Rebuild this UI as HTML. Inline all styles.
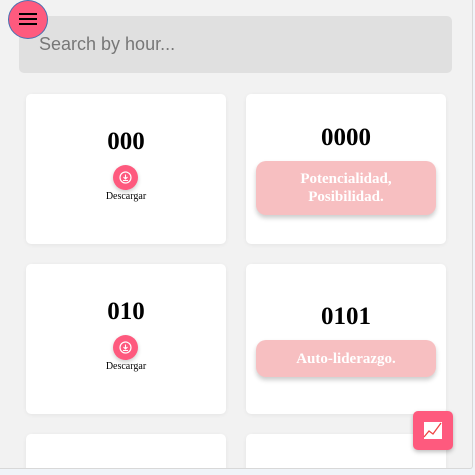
<!DOCTYPE html>
<html><head><style>
html,body{margin:0;width:475px;height:475px;overflow:hidden}
body{background:#f0f4f8;font-family:"Liberation Serif",serif;position:relative}
.main{position:absolute;left:0;top:0;width:472px;height:468px;background:#f2f2f2;border-right:1px solid #d8d8d8;border-bottom:1px solid #d8d8d8;border-bottom-right-radius:3px;overflow:hidden}
.search{position:absolute;left:19px;top:16px;width:433px;height:57px;background:#e0e0e0;border-radius:5px;font-family:"Liberation Sans",sans-serif;font-size:18px;color:#777;line-height:57px;padding-left:20px;box-sizing:border-box}
.menu{position:absolute;left:8px;top:0;width:40px;height:39px;border-radius:50%;background:#fe5a7e;border:1px solid #4a6fb0;box-sizing:border-box}
.menu i{position:absolute;left:10px;width:18px;height:2px;background:#000}
.card{position:absolute;width:200px;height:150px;background:#fff;border-radius:5px;box-shadow:0 1px 4px rgba(0,0,0,.06);text-align:center}
.t{font-weight:bold;font-size:25px;position:absolute;left:0;right:0}
.dl{position:absolute;left:87px;width:25px;height:25px;border-radius:50%;background:#fe5a7e;box-shadow:0 2px 4px rgba(0,0,0,.2)}
.lbl{position:absolute;left:0;right:0;font-size:10px}
.btn{position:absolute;left:10px;width:180px;background:#f7bfc1;border-radius:10px;color:#fff;font-weight:bold;font-size:15px;box-shadow:0 3px 5px rgba(0,0,0,.2);display:flex;align-items:center;justify-content:center;line-height:18px}
.fab{position:absolute;left:413px;top:411px;width:40px;height:39px;background:#fe5a7e;border-radius:5px;box-shadow:0 2px 4px rgba(0,0,0,.25)}
</style></head><body>
<div class="main">
<div class="search">Search by hour...</div>
<div class="card" style="left:26px;top:94px"><div class="t" style="top:34px">000</div><div class="dl" style="top:71px"><svg width="25" height="25" viewBox="0 0 25 25"><circle cx="12.5" cy="12.5" r="5.5" fill="none" stroke="#fff" stroke-width="1.2"/><path d="M12.5 9.5v4.5M10.5 12l2 2 2-2M10 15.5h5" stroke="#fff" stroke-width="1.1" fill="none"/></svg></div><div class="lbl" style="top:97px">Descargar</div></div>
<div class="card" style="left:246px;top:94px"><div class="t" style="top:30px">0000</div><div class="btn" style="top:67px;height:54px">Potencialidad,<br>Posibilidad.</div></div>
<div class="card" style="left:26px;top:264px"><div class="t" style="top:34px">010</div><div class="dl" style="top:71px"><svg width="25" height="25" viewBox="0 0 25 25"><circle cx="12.5" cy="12.5" r="5.5" fill="none" stroke="#fff" stroke-width="1.2"/><path d="M12.5 9.5v4.5M10.5 12l2 2 2-2M10 15.5h5" stroke="#fff" stroke-width="1.1" fill="none"/></svg></div><div class="lbl" style="top:97px">Descargar</div></div>
<div class="card" style="left:246px;top:264px"><div class="t" style="top:39px">0101</div><div class="btn" style="top:76px;height:37px">Auto-liderazgo.</div></div>
<div class="card" style="left:26px;top:434px"></div>
<div class="card" style="left:246px;top:434px"></div>
<div class="fab"><svg width="40" height="39" viewBox="0 0 40 39"><rect x="11" y="11" width="18" height="17" fill="#fff"/><path d="M11 26 L16 20 L20 23 L28 12" stroke="#e44" stroke-width="1.3" fill="none"/></svg></div>
</div>
<div class="menu"><i style="top:12px"></i><i style="top:17px"></i><i style="top:22px"></i></div>
</body></html>
